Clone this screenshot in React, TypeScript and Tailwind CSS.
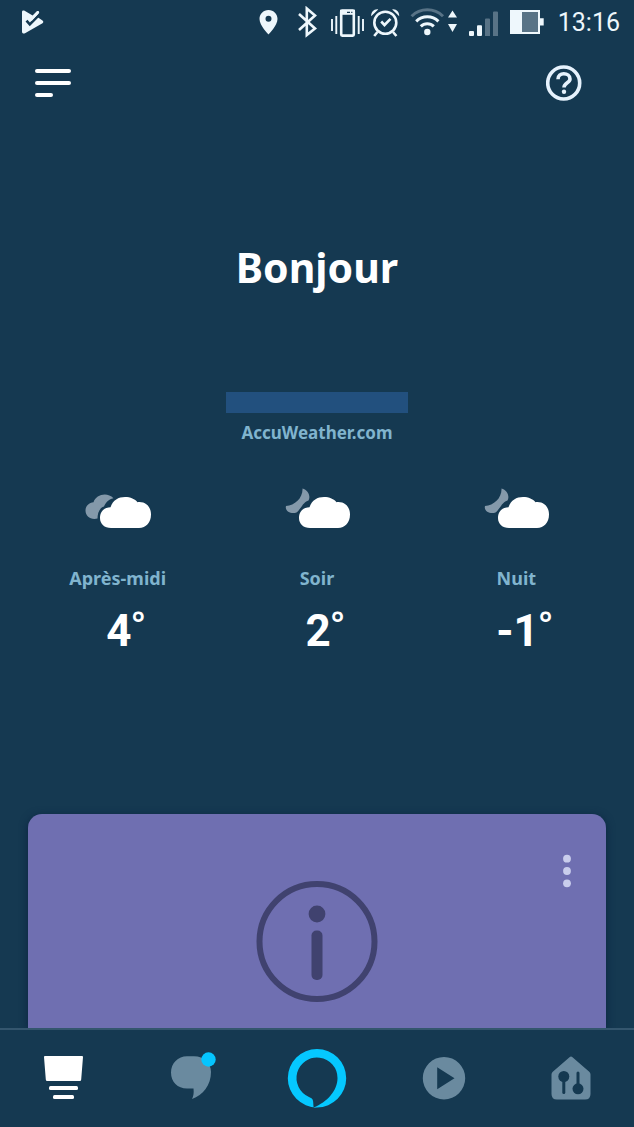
import type { ReactNode } from "react"

const forecasts = [
  { label: "Après-midi", temperature: "4", night: false },
  { label: "Soir", temperature: "2", night: true },
  { label: "Nuit", temperature: "-1", night: true },
]

function StatusBar() {
  return (
    <div className="flex h-11 shrink-0 items-center justify-between pr-3.5 pl-5 text-[#eef7fc]">
      <svg className="h-8 w-7" viewBox="0 0 28 32" fill="currentColor">
        <path d="M2 6C2 4.6 3.4 4.2 4.6 4.8L12.6 9.4 16.8 5.3C18 4.3 19.8 5.8 18.9 7.2L17 10.8 22.5 14.6C23.6 15.4 23.6 16.6 22.5 17.3L5 27.2C3.6 28 2 27.4 2 25.8Z" />
        <path d="M6.5 14.6L9.8 18.4L20.2 7.8" fill="none" stroke="#153951" strokeWidth="2.6" />
        <path d="M11.2 13.6L18 6.3" fill="none" stroke="currentColor" strokeWidth="2.4" strokeLinecap="round" />
      </svg>
      <div className="flex items-center gap-1.5">
        <svg className="h-8 w-8" viewBox="0 0 32 32" fill="currentColor">
          <path
            fillRule="evenodd"
            d="M10.5 4C5.3 4 1.5 8 1.5 13C1.5 19.5 10.5 28.5 10.5 28.5S19.5 19.5 19.5 13C19.5 8 15.7 4 10.5 4ZM10.5 9.7A3 3 0 1 1 10.5 15.7A3 3 0 1 1 10.5 9.7Z"
          />
        </svg>
        <svg className="h-8 w-7" viewBox="0 0 28 32" fill="none" stroke="currentColor" strokeWidth="2.6">
          <path d="M3 8L19 22.5L10.8 29V2.5L19 9.5L3 24" />
        </svg>
        <svg className="h-8 w-[34px]" viewBox="0 0 34 32" fill="none" stroke="currentColor">
          <rect x="11.2" y="4.6" width="12.6" height="25" rx="1" strokeWidth="2.6" />
          <path d="M10 6.3H25" strokeWidth="5" />
          <path d="M17 6.4H20M21.2 6.4H22.4" stroke="#153951" strokeWidth="1.4" />
          <path d="M2 13V25M6.3 10V28M28.7 10V28M33 13V25" strokeWidth="1.9" />
        </svg>
        <svg className="h-8 w-[30px]" viewBox="0 0 30 32" fill="none" stroke="currentColor" strokeWidth="2.6">
          <circle cx="15.3" cy="16.7" r="11" />
          <path d="M11.2 15.5L14.5 19L20.5 12.8" />
          <path d="M7.5 26L4.2 30M23 26L26.4 30" />
          <path d="M1.2 10.2C1 6 4 2.8 8.2 3.4ZM29.2 10.2C29.4 6 26.4 2.8 22.2 3.4Z" fill="currentColor" strokeWidth="0" />
        </svg>
        <svg className="h-8 w-[52px]" viewBox="0 0 52 32" fill="none" stroke="currentColor" strokeWidth="3">
          <path d="M5.6 10.2A22.5 22.5 0 0 1 37 10.2" className="text-[#587386]" />
          <path d="M10.2 15.4A15.8 15.8 0 0 1 32.4 15.4" />
          <path d="M14.8 20.4A9.2 9.2 0 0 1 27.8 20.4" />
          <circle cx="21.3" cy="26" r="3.2" fill="currentColor" strokeWidth="0" />
          <path d="M46.5 4.5L51 11.5H42ZM46.5 26L51 18H42Z" fill="currentColor" strokeWidth="0" />
        </svg>
        <svg className="h-8 w-9" viewBox="0 0 36 32" fill="currentColor">
          <rect x="5" y="25" width="5" height="5" rx="1" />
          <rect x="13" y="19.3" width="5" height="10.7" rx="1" />
          <path d="M21 13.5Q21 12.5 22 12.5H25Q26 12.5 26 13.5V30H21ZM29 6.5Q29 5.5 30 5.5H33Q34 5.5 34 6.5V30H29Z" fill="#587386" />
        </svg>
        <svg className="h-8 w-11" viewBox="0 0 44 32" fill="currentColor">
          <path d="M4 4H34V12.3H37.7V19.5H34V28H4Z" />
          <rect x="16" y="6" width="16" height="20" fill="#587386" />
        </svg>
        <span className="pt-0.5 pl-0.5 font-[Roboto,sans-serif] text-[25px] leading-8">13:16</span>
      </div>
    </div>
  )
}

function Cloud({ night }: { night: boolean }) {
  return (
    <svg className="h-11 w-[68px]" viewBox="0 0 68 44">
      {night ? (
        <path
          d="M19.5 2.5C25 4 28 10 25.5 14.5C19 17 19 22 13.5 26.5C8 28.5 1.5 25 3 20C12 19.5 20 12 19.5 2.5Z"
          fill="#8499aa"
        />
      ) : (
        <path
          d="M10.5 33C5 33 1.5 29 1.5 24.5C1.5 20 5 16.5 9.5 16.2C12 8.5 23 5.5 29.5 12.2C24 13.5 21.5 17 20 20.5C15.5 22 13.5 27 13.5 32.5Z"
          fill="#8499aa"
        />
      )}
      <path
        d="M27 42C20.5 42 16 38 16 32C16 25.5 20.5 21.2 26.5 21.2C29 14 34.5 11 41 11C46.5 11 51 13 53.5 16.2C61.5 15.2 67 20.5 67 28.5C67 36.5 62 42 55 42Z"
        fill="#fff"
        stroke="#153951"
        strokeWidth="4"
        paintOrder="stroke"
      />
    </svg>
  )
}

function NavButton({ label, children }: { label: string; children: ReactNode }) {
  return (
    <button type="button" aria-label={label} className="flex items-center justify-center">
      <svg className="size-15" viewBox="0 0 60 60" fill="#6a8a9f">
        {children}
      </svg>
    </button>
  )
}

export default function App() {
  return (
    <div className="flex h-screen flex-col bg-[#153951] font-['Noto_Sans','Open_Sans',sans-serif] text-white">
      <StatusBar />

      <header className="flex h-[78px] shrink-0 items-center justify-between pr-[52px] pl-[35px]">
        <button type="button" aria-label="Menu" className="flex flex-col gap-2">
          <span className="h-1 w-9 rounded-sm bg-white" />
          <span className="h-1 w-9 rounded-sm bg-white" />
          <span className="h-1 w-[18px] rounded-sm bg-white" />
        </button>
        <button type="button" aria-label="Aide">
          <svg className="size-9" viewBox="0 0 36 36" fill="none" stroke="#e6f2fd" strokeWidth="3.6">
            <circle cx="17.7" cy="18" r="16" />
            <path d="M12 14.2C12 10.6 14.6 8.8 17.8 8.8C21.2 8.8 24 10.8 24 14C24 18 18 17.6 18 22.6" />
            <circle cx="18" cy="26.8" r="2.2" fill="#e6f2fd" strokeWidth="0" />
          </svg>
        </button>
      </header>

      <main className="flex min-h-0 flex-1 flex-col overflow-hidden">
        <h1 className="mt-[121px] text-center text-[41px] leading-12 font-bold">Bonjour</h1>

        <section className="mt-[101px] flex shrink-0 flex-col items-center">
          <div className="h-[21px] w-[182px] bg-[#22507e]" />
          <a href="#accuweather" className="mt-2 text-[17px] leading-6 font-bold text-[#80b4ce]">
            AccuWeather.com
          </a>
          <div className="mt-[41px] grid w-full grid-cols-3 px-4.5">
            {forecasts.map((forecast) => (
              <div key={forecast.label} className="flex flex-col items-center">
                <Cloud night={forecast.night} />
                <p className="mt-9 text-lg leading-6 font-bold text-[#80b4ce]">{forecast.label}</p>
                <p className="mt-[17px] flex items-start pl-4 font-bold">
                  <span className="font-[Roboto,sans-serif] text-[44px] leading-12">{forecast.temperature}</span>
                  <span className="text-[32px] leading-8 font-semibold">°</span>
                </p>
              </div>
            ))}
          </div>
        </section>

        {/* Home card, continues below the tab bar */}
        <section className="mx-7 mt-[159px] grid flex-1 grid-cols-[1fr_auto_1fr] items-start rounded-t-[14px] bg-[#6f6fb1] shadow-[0_2px_8px_#0b2440]">
          <svg className="col-start-2 mt-[66px] size-[122px]" viewBox="0 0 122 122" fill="#40426f">
            <circle cx="61" cy="61.5" r="57.5" fill="none" stroke="#40426f" strokeWidth="6" />
            <circle cx="61" cy="34" r="8.4" />
            <rect x="55.5" y="50.5" width="11" height="49.5" rx="5" />
          </svg>
          <button type="button" aria-label="Plus d'options" className="mt-10 mr-[34px] justify-self-end">
            <svg className="h-[34px] w-[10px]" viewBox="0 0 10 34" fill="#c9cdec">
              <circle cx="5" cy="4.7" r="3.9" />
              <circle cx="5" cy="17" r="3.9" />
              <circle cx="5" cy="29.3" r="3.9" />
            </svg>
          </button>
        </section>
      </main>

      <nav className="relative grid h-[99px] shrink-0 grid-cols-5 border-t-2 border-[#34566e] bg-[#153951]">
        <NavButton label="Accueil">
          <g fill="#fff">
            <path d="M12 7H49Q50.1 7 50 8.1L48.2 30.5Q48.1 32 46.8 32H14.2Q12.9 32 12.8 30.5L11 8.1Q10.9 7 12 7Z" />
            <rect x="16" y="37" width="29" height="4" rx="1.5" />
            <rect x="20" y="46" width="21" height="4" rx="1.5" />
          </g>
        </NavButton>
        <NavButton label="Communiquer">
          <path d="M27 7.3H34C44 7.3 51 14 51 23C51 36 43 46 32 50C33.5 47 34 44 33.5 39.5H27C17.5 39.5 11 33 11 23.5C11 14.5 18 7.3 27 7.3Z" />
          <circle cx="48.5" cy="10.5" r="7.2" fill="#05c5ff" />
        </NavButton>
        <NavButton label="Alexa">
          <path
            fill="#05c8ff"
            fillRule="evenodd"
            d="M30 0A29.2 29.2 0 1 1 30 58.4A29.2 29.2 0 1 1 30 0ZM26.7 58.5C26 55 26.8 51.5 24.8 49.5C24 48.7 23 48.4 22 47.9A20.5 20.5 0 1 1 50.5 29C50.5 42 40 53 26.7 58.5Z"
          />
        </NavButton>
        <NavButton label="Lecture">
          <path fillRule="evenodd" d="M30 8A21.2 21.2 0 1 1 30 50.4A21.2 21.2 0 1 1 30 8ZM23.2 18.3V40.2L40.5 29.2Z" />
        </NavButton>
        <NavButton label="Appareils">
          <path d="M28.5 8.2Q30 6.8 31.5 8.2L48.5 23Q49.5 24 49.5 25.5V45Q49.5 50.5 44 50.5H16Q10.5 50.5 10.5 45V25.5Q10.5 24 11.5 23Z" />
          <g fill="#153951" stroke="#153951" strokeWidth="3" strokeLinecap="round">
            <circle cx="22.8" cy="27.5" r="5.5" strokeWidth="0" />
            <path d="M22.8 28V43.5" />
            <circle cx="37" cy="39.8" r="5.5" strokeWidth="0" />
            <path d="M37 39V24" />
          </g>
        </NavButton>
      </nav>
    </div>
  )
}
